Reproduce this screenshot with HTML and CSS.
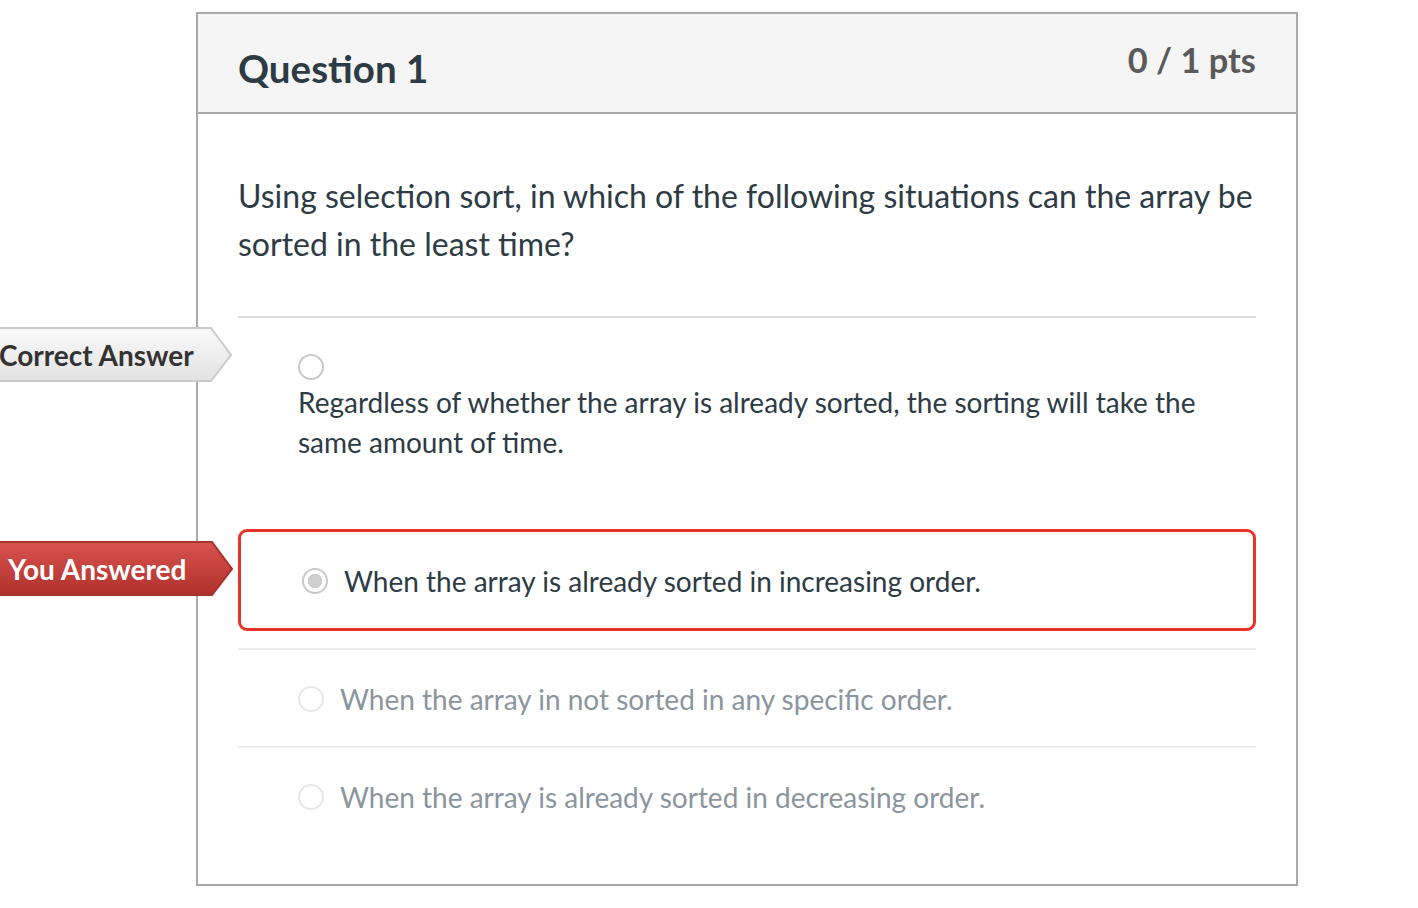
FILE: index.html
```html
<!DOCTYPE html>
<html lang="en">
<head>
<meta charset="utf-8">
<title>Question 1</title>
<link rel="stylesheet" href="styles.css">
</head>
<body>
<div class="page">
  <div class="card">
    <div class="card-header">
      <h2 class="q-title">Question 1</h2>
      <div class="q-points">0 / 1 pts</div>
    </div>
    <div class="card-body">
      <p class="q-text">Using selection sort, in which of the following situations can the array be sorted in the least time?</p>
      <div class="answers">
        <div class="answer answer-correct">
          <span class="radio"></span>
          <div class="answer-text">Regardless of whether the array is already sorted, the sorting will take the same amount of time.</div>
        </div>
        <div class="answer answer-selected">
          <span class="radio radio-checked"></span>
          <div class="answer-text">When the array is already sorted in increasing order.</div>
        </div>
        <div class="answer answer-plain">
          <span class="radio radio-faint"></span>
          <div class="answer-text">When the array in not sorted in any specific order.</div>
        </div>
        <div class="answer answer-plain">
          <span class="radio radio-faint"></span>
          <div class="answer-text">When the array is already sorted in decreasing order.</div>
        </div>
      </div>
    </div>
  </div>

  <div class="flag flag-correct">
    <svg class="flag-shape" width="234" height="56" viewBox="0 0 234 56">
      <defs>
        <linearGradient id="gGray" x1="0" y1="0" x2="0" y2="1">
          <stop offset="0" stop-color="#fafafa"/>
          <stop offset="1" stop-color="#e2e2e2"/>
        </linearGradient>
      </defs>
      <polygon points="-2,1 211,1 231,28 211,54 -2,54" fill="url(#gGray)" stroke="#c9c9c9" stroke-width="2"/>
    </svg>
    <span class="flag-label">Correct Answer</span>
  </div>

  <div class="flag flag-you">
    <svg class="flag-shape" width="236" height="56" viewBox="0 0 236 56">
      <defs>
        <linearGradient id="gRed" x1="0" y1="0" x2="0" y2="1">
          <stop offset="0" stop-color="#d9534f"/>
          <stop offset="1" stop-color="#b0302b"/>
        </linearGradient>
      </defs>
      <polygon points="-2,1 212,1 232,28 212,54 -2,54" fill="url(#gRed)" stroke="#a8322c" stroke-width="2"/>
    </svg>
    <span class="flag-label">You Answered</span>
  </div>
</div>
</body>
</html>
```

FILE: styles.css
```css
* { box-sizing: border-box; }

html, body {
  margin: 0;
  padding: 0;
  background: #ffffff;
  font-family: Lato, "Open Sans", "Liberation Sans", sans-serif;
  color: #2d3b45;
}

.page {
  position: relative;
  padding: 12px 0 0 196px;
  width: 1418px;
  height: 908px;
}

.card {
  width: 1102px;
  border: 2px solid #a9a9a9;
  background: #ffffff;
}

.card-header {
  display: flex;
  justify-content: space-between;
  align-items: flex-start;
  height: 100px;
  padding: 32px 40px 0 40px;
  background: #f5f5f5;
  border-bottom: 2px solid #a9a9a9;
}

.q-title {
  margin: 0;
  font-size: 38.5px;
  line-height: 44px;
  font-weight: 700;
  color: #2d3b45;
}

.q-points {
  margin-top: -6px;
  font-size: 34.4px;
  line-height: 40px;
  font-weight: 700;
  color: #5a5a5a;
}

.card-body {
  padding: 58px 40px 40px 40px;
}

.q-text {
  margin: 0;
  padding-bottom: 48px;
  font-size: 32px;
  line-height: 48px;
  border-bottom: 2px solid #dedede;
}

.answers {
  display: flex;
  flex-direction: column;
}

.answer-text {
  font-size: 28px;
  line-height: 40px;
}

.radio {
  display: block;
  flex: none;
  width: 26px;
  height: 26px;
  border-radius: 50%;
  border: 2px solid #c8c8c8;
  background: #ffffff;
}

.radio-checked {
  border-color: #c9c9c9;
  background: radial-gradient(circle, #cfcfcf 0 7px, #ffffff 7.5px);
}

.radio-faint {
  border-color: #e6e6e6;
}

.answer-correct {
  padding: 36px 60px 0 60px;
}

.answer-correct .radio {
  margin-bottom: 2px;
}

.answer-selected {
  display: flex;
  align-items: center;
  gap: 16px;
  margin-top: 67px;
  margin-bottom: 17px;
  height: 102px;
  padding-left: 61px;
  padding-top: 2px;
  border: 3px solid #e7332a;
  border-radius: 9px;
}

.answer-plain {
  display: flex;
  align-items: center;
  gap: 16px;
  height: 98px;
  padding-left: 60px;
  padding-top: 2px;
  border-top: 2px solid #ececec;
  color: #8b959e;
}

.flag {
  position: absolute;
  left: 0;
  width: 236px;
  height: 56px;
}

.flag-shape {
  position: absolute;
  left: 0;
  top: 0;
  display: block;
}

.flag-label {
  position: absolute;
  top: 0;
  height: 56px;
  display: flex;
  align-items: center;
  font-size: 28px;
  font-weight: 700;
  white-space: nowrap;
}

.flag-correct {
  top: 327px;
}

.flag-correct .flag-label {
  left: -1px;
  color: #333333;
}

.flag-you {
  top: 541px;
}

.flag-you .flag-label {
  left: 8px;
  color: #ffffff;
}
```
